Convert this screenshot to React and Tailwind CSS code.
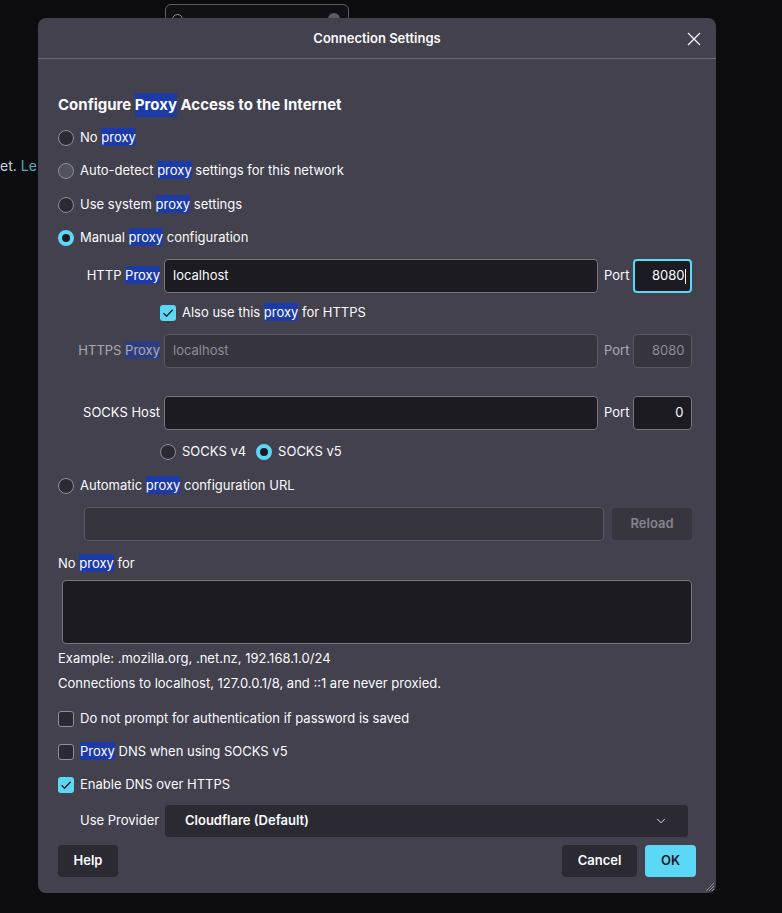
import React from "react";
import { ChevronDown } from "lucide-react";

const ACCENT = "bg-[#5cd8f7]";

function Hl({ children }) {
  return <span className="bg-[#1c3aa8] text-white py-px">{children}</span>;
}

function Radio({ checked, hover }) {
  if (checked) {
    return (
      <span className="w-4 h-4 rounded-full border-[4px] border-[#5cd8f7] bg-[#1c1b22] shrink-0" />
    );
  }
  return (
    <span
      className={`w-4 h-4 rounded-full border border-[#8f8f9d] shrink-0 ${
        hover ? "bg-[#52525e]" : "bg-[#2b2a33]"
      }`}
    />
  );
}

function Checkbox({ checked }) {
  if (checked) {
    return (
      <span className={`w-4 h-4 rounded-[3px] ${ACCENT} flex items-center justify-center shrink-0`}>
        <svg width="12" height="12" viewBox="0 0 12 12" fill="none">
          <path d="M1.5 6.2 L4.6 9.2 L10.6 2.8" stroke="#1c1b22" strokeWidth="1.3" />
        </svg>
      </span>
    );
  }
  return <span className="w-4 h-4 rounded-[3px] border border-[#8f8f9d] bg-[#2b2a33] shrink-0" />;
}

function Row({ className = "", children }) {
  return <div className={`h-5 flex items-center gap-[6px] ${className}`}>{children}</div>;
}

export default function App() {
  return (
    <div
      className="relative min-h-[913px] w-[782px] bg-[#0c0c0f] text-[#fbfbfe] text-[13px] overflow-hidden"
      style={{ fontFamily: "Inter, 'Noto Sans', sans-serif" }}
    >
      {/* page behind the dialog */}
      <div className="absolute left-[165px] top-[4px] w-[184px] h-[32px] rounded-[6px] border border-[#5b5b66] bg-[#111114]">
        <span className="absolute left-[6px] top-[9px] w-[11px] h-[11px] rounded-full border border-[#8f8f9d]" />
        <span className="absolute right-[8px] top-[8px] w-[12px] h-[12px] rounded-full bg-[#5b5b66]" />
      </div>
      <div className="absolute left-0 top-[155px] text-[14px] text-[#d0d0d6]">
        et. <span className="text-[#4fb0c6]">Le</span>
      </div>

      {/* dialog */}
      <div className="relative z-10 ml-[38px] mt-[18px] w-[678px] h-[875px] rounded-[8px] bg-[#42414d] flex flex-col">
        {/* header */}
        <div className="h-[41px] pt-[2px] border-b border-[#6a6974] flex items-center justify-center relative shrink-0">
          <span className="font-semibold text-[13px]">Connection Settings</span>
          <button className="absolute right-[14px] top-[13px] w-[16px] h-[16px] flex items-center justify-center">
            <svg width="14" height="14" viewBox="0 0 14 14">
              <path d="M1 1 L13 13 M13 1 L1 13" stroke="#fbfbfe" strokeWidth="1.3" />
            </svg>
          </button>
        </div>

        <div className="px-[20px] flex flex-col">
          <div className="h-5 mt-[36px] flex items-center text-[15px] font-bold">
            Configure&nbsp;<Hl>Proxy</Hl>&nbsp;Access to the Internet
          </div>

          <Row className="mt-[13px]">
            <Radio />
            <span>
              No <Hl>proxy</Hl>
            </span>
          </Row>
          <Row className="mt-[13px]">
            <Radio hover />
            <span>
              Auto-detect <Hl>proxy</Hl> settings for this network
            </span>
          </Row>
          <Row className="mt-[14px]">
            <Radio />
            <span>
              Use system <Hl>proxy</Hl> settings
            </span>
          </Row>
          <Row className="mt-[13px]">
            <Radio checked />
            <span>
              Manual <Hl>proxy</Hl> configuration
            </span>
          </Row>

          {/* HTTP Proxy */}
          <div className="mt-[11px] h-[34px] flex items-center">
            <span className="w-[102px] text-right">
              HTTP <Hl>Proxy</Hl>
            </span>
            <div className="ml-[4px] w-[434px] h-[34px] rounded-[4px] border border-[#77767f] bg-[#1c1b22] flex items-center px-[8px]">
              localhost
            </div>
            <span className="ml-[6px]">Port</span>
            <div className="ml-[4px] w-[59px] h-[34px] rounded-[4px] border-2 border-[#5cd8f7] bg-[#1c1b22] flex items-center justify-end pr-[4px]">
              8080<span className="w-px h-[15px] bg-[#fbfbfe] ml-px" />
            </div>
          </div>

          <Row className="mt-[10px] pl-[102px]">
            <Checkbox checked />
            <span>
              Also use this <Hl>proxy</Hl> for HTTPS
            </span>
          </Row>

          {/* HTTPS Proxy (disabled) */}
          <div className="mt-[11px] h-[34px] flex items-center">
            <span className="w-[102px] text-right opacity-[0.55]">
              HTTPS <Hl>Proxy</Hl>
            </span>
            <div className="ml-[4px] w-[434px] h-[34px] rounded-[4px] border border-[#5b5a63] bg-[#36353e] flex items-center px-[8px] text-[#8d8c93]">
              localhost
            </div>
            <span className="ml-[6px] opacity-[0.55]">Port</span>
            <div className="ml-[4px] w-[59px] h-[34px] rounded-[4px] border border-[#5b5a63] bg-[#36353e] flex items-center justify-end pr-[7px] text-[#8d8c93]">
              8080
            </div>
          </div>

          {/* SOCKS Host */}
          <div className="mt-[28px] h-[34px] flex items-center">
            <span className="w-[102px] text-right">SOCKS Host</span>
            <div className="ml-[4px] w-[434px] h-[34px] rounded-[4px] border border-[#77767f] bg-[#1c1b22]" />
            <span className="ml-[6px]">Port</span>
            <div className="ml-[4px] w-[59px] h-[34px] rounded-[4px] border border-[#77767f] bg-[#1c1b22] flex items-center justify-end pr-[8px]">
              0
            </div>
          </div>

          <Row className="mt-[12px] pl-[102px]">
            <Radio />
            <span>SOCKS v4</span>
            <span className="ml-[4px] flex items-center gap-[6px]">
              <Radio checked />
              <span>SOCKS v5</span>
            </span>
          </Row>

          <Row className="mt-[14px]">
            <Radio />
            <span>
              Automatic <Hl>proxy</Hl> configuration URL
            </span>
          </Row>

          <div className="mt-[11px] h-[34px] flex items-center pl-[26px]">
            <div className="w-[520px] h-[34px] rounded-[4px] border border-[#5b5a63] bg-[#36353e]" />
            <button className="ml-[8px] w-[80px] h-[32px] rounded-[4px] bg-[#37363f] text-[#85848b] font-semibold">
              Reload
            </button>
          </div>

          <Row className="mt-[13px]">
            <span>
              No <Hl>proxy</Hl> for
            </span>
          </Row>
          <div className="mt-[6px] ml-[4px] w-[630px] h-[64px] rounded-[4px] border border-[#77767f] bg-[#1c1b22]" />

          <Row className="mt-[5px]">Example: .mozilla.org, .net.nz, 192.168.1.0/24</Row>
          <Row className="mt-[5px]">Connections to localhost, 127.0.0.1/8, and ::1 are never proxied.</Row>

          <Row className="mt-[15px]">
            <Checkbox />
            <span>Do not prompt for authentication if password is saved</span>
          </Row>
          <Row className="mt-[13px]">
            <Checkbox />
            <span>
              <Hl>Proxy</Hl> DNS when using SOCKS v5
            </span>
          </Row>
          <Row className="mt-[13px]">
            <Checkbox checked />
            <span>Enable DNS over HTTPS</span>
          </Row>

          <div className="mt-[10px] h-[32px] flex items-center pl-[22px]">
            <span className="w-[85px]">Use Provider</span>
            <div className="w-[523px] h-[32px] rounded-[4px] bg-[#2b2a33] flex items-center justify-between pl-[20px] pr-[20px] font-semibold">
              <span>Cloudflare (Default)</span>
              <ChevronDown size={14} strokeWidth={1.5} />
            </div>
          </div>

          <div className="mt-[8px] h-[32px] flex items-center justify-between">
            <button className="w-[60px] h-[32px] rounded-[4px] bg-[#2b2a33] font-semibold">Help</button>
            <div className="flex items-center gap-[8px]">
              <button className="w-[75px] h-[32px] rounded-[4px] bg-[#2b2a33] font-semibold">Cancel</button>
              <button className={`w-[51px] h-[32px] rounded-[4px] ${ACCENT} text-[#1c1b22] font-semibold`}>
                OK
              </button>
            </div>
          </div>
        </div>

        {/* resize grip */}
        <svg className="absolute right-[1px] bottom-[1px]" width="12" height="12" viewBox="0 0 12 12">
          <path d="M11 3 L3 11 M11 6 L6 11 M11 9 L9 11" stroke="#8f8f9d" strokeWidth="1" />
        </svg>
      </div>
    </div>
  );
}
